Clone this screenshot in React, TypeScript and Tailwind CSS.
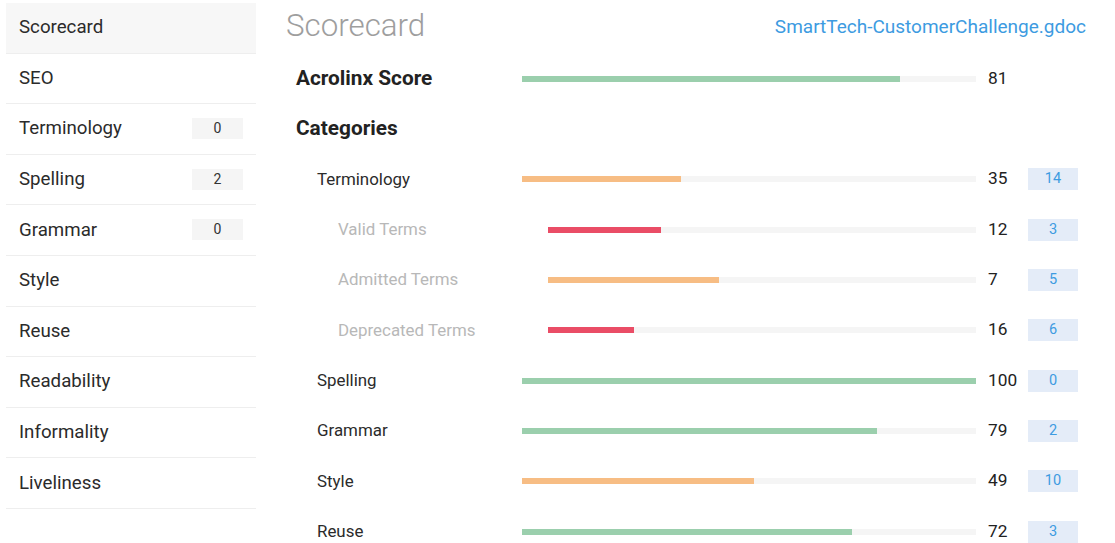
import React from "react";

const sideItems: { label: string; badge?: string; active?: boolean }[] = [
  { label: "Scorecard", active: true },
  { label: "SEO" },
  { label: "Terminology", badge: "0" },
  { label: "Spelling", badge: "2" },
  { label: "Grammar", badge: "0" },
  { label: "Style" },
  { label: "Reuse" },
  { label: "Readability" },
  { label: "Informality" },
  { label: "Liveliness" },
];

type Row = {
  label: string;
  level: 1 | 2;
  score: string;
  fill: number;
  color: string;
  badge: string;
};

const rows: Row[] = [
  { label: "Terminology", level: 1, score: "35", fill: 159, color: "#f7bd84", badge: "14" },
  { label: "Valid Terms", level: 2, score: "12", fill: 113, color: "#ea4d66", badge: "3" },
  { label: "Admitted Terms", level: 2, score: "7", fill: 171, color: "#f7bd84", badge: "5" },
  { label: "Deprecated Terms", level: 2, score: "16", fill: 86, color: "#ea4d66", badge: "6" },
  { label: "Spelling", level: 1, score: "100", fill: 454, color: "#9bcfad", badge: "0" },
  { label: "Grammar", level: 1, score: "79", fill: 355, color: "#9bcfad", badge: "2" },
  { label: "Style", level: 1, score: "49", fill: 232, color: "#f7bd84", badge: "10" },
  { label: "Reuse", level: 1, score: "72", fill: 330, color: "#9bcfad", badge: "3" },
];

function Bar({ fill, color, wide }: { fill: number; color: string; wide: boolean }) {
  return (
    <div className={(wide ? "w-[454px]" : "w-[428px]") + " h-[6px] bg-[#f5f5f5] shrink-0"}>
      <div className="h-full" style={{ width: fill, backgroundColor: color }} />
    </div>
  );
}

export default function App() {
  return (
    <div
      className="flex w-[1115px] h-[543px] overflow-hidden bg-white pl-[6px]"
      style={{ fontFamily: "Roboto, 'Noto Sans', sans-serif" }}
    >
      {/* Sidebar */}
      <div className="w-[250px] shrink-0 pt-[3px] flex flex-col">
        {sideItems.map((it) => (
          <div
            key={it.label}
            className={
              "flex items-center justify-between h-[50.6px] border-b border-[#eeeeee] pl-[13px] pr-[13px] pb-[1px] " +
              (it.active ? "bg-[#f7f7f7]" : "")
            }
          >
            <span className="text-[18.7px] text-[#2b2b2b]">{it.label}</span>
            {it.badge !== undefined && (
              <span className="w-[51px] h-[21px] bg-[#f5f5f5] text-[14px] text-[#333] flex items-center justify-center">
                {it.badge}
              </span>
            )}
          </div>
        ))}
      </div>

      {/* Main */}
      <div className="ml-[30px] w-[800px] flex flex-col">
        <div className="h-[51px] shrink-0 pt-[1px] flex items-center justify-between">
          <span className="text-[31.3px] leading-none font-light text-[#9e9e9e]">Scorecard</span>
          <span className="text-[19px] leading-none text-[#3d9be1]">SmartTech-CustomerChallenge.gdoc</span>
        </div>
        <div className="pt-[2.5px] pl-[10px] flex flex-col">
          <div className="h-[50.33px] flex items-center">
            <span className="w-[226px] shrink-0 text-[20.8px] font-bold text-[#222]">Acrolinx Score</span>
            <Bar fill={378} color="#9bcfad" wide />
            <span className="ml-[12px] text-[17.3px] text-[#222]">81</span>
          </div>
          <div className="h-[50.33px] flex items-center">
            <span className="text-[20.8px] font-bold text-[#222]">Categories</span>
          </div>
          {rows.map((r) => (
            <div key={r.label} className="h-[50.33px] flex items-center">
              {r.level === 1 ? (
                <span className="pl-[21px] w-[226px] shrink-0 text-[16.9px] text-[#2b2b2b]">{r.label}</span>
              ) : (
                <span className="pl-[42px] w-[252px] shrink-0 text-[16.9px] text-[#b8b8b8]">{r.label}</span>
              )}
              <Bar fill={r.fill} color={r.color} wide={r.level === 1} />
              <span className="ml-[12px] w-[40px] shrink-0 text-[17.3px] text-[#222]">{r.score}</span>
              <span className="w-[50px] h-[22px] bg-[#e4ecf8] text-[14.5px] text-[#3d9be1] flex items-center justify-center">
                {r.badge}
              </span>
            </div>
          ))}
        </div>
      </div>
    </div>
  );
}
